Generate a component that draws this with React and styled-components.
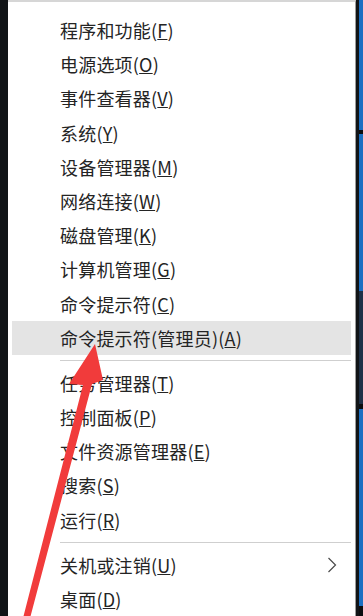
import React from "react";
import styled, { createGlobalStyle } from "styled-components";

const GlobalStyle = createGlobalStyle`
  html, body {
    margin: 0;
    padding: 0;
    background: #111417;
    overflow: hidden;
  }
`;

const StPage = styled.div`
  position: relative;
  display: flex;
  width: 363px;
  height: 616px;
  overflow: hidden;
  font-family: "Microsoft YaHei", "Noto Sans CJK SC", sans-serif;
`;

const StDarkEdge = styled.div`
  width: ${(p) => p.$w}px;
  flex-shrink: 0;
  background: #111417;
`;

const StMenu = styled.div`
  width: 348px;
  flex-shrink: 0;
  background: #ffffff;
  border-top: 2px solid #d6d6d6;
  border-right: 1px solid #9c9c9c;
  box-sizing: border-box;
  padding-top: 11px;
  display: flex;
  flex-direction: column;
`;

const StItem = styled.div`
  height: 34.4px;
  margin: 0 4px;
  padding: 0 14px 0 48px;
  display: flex;
  align-items: center;
  font-size: 18px;
  color: #242424;
  letter-spacing: 0.2px;
  background: ${(p) => (p.$active ? "#e4e4e4" : "transparent")};
  white-space: nowrap;
`;

const StSeparator = styled.div`
  height: 11px;
  margin: 0 4px 0 52px;
  display: flex;
  align-items: center;
  &::after {
    content: "";
    flex: 1;
    height: 1px;
    background: #cfcfcf;
  }
`;

const StChevron = styled.svg`
  margin-left: auto;
  width: 10px;
  height: 16px;
`;

const StStrip = styled.div`
  width: 4px;
  flex-shrink: 0;
  display: flex;
  flex-direction: column;
`;

const StSegment = styled.div`
  height: ${(p) => p.$h}px;
  background: ${(p) => p.$c};
`;

const StArrow = styled.svg`
  position: absolute;
  left: 0;
  top: 0;
  width: 363px;
  height: 616px;
  pointer-events: none;
`;

const top = [
  ["程序和功能", "F"],
  ["电源选项", "O"],
  ["事件查看器", "V"],
  ["系统", "Y"],
  ["设备管理器", "M"],
  ["网络连接", "W"],
  ["磁盘管理", "K"],
  ["计算机管理", "G"],
  ["命令提示符", "C"],
  ["命令提示符(管理员)", "A", true],
];

const middle = [
  ["任务管理器", "T"],
  ["控制面板", "P"],
  ["文件资源管理器", "E"],
  ["搜索", "S"],
  ["运行", "R"],
];

const bottom = [
  ["关机或注销", "U", false, true],
  ["桌面", "D"],
];

const segments = [
  [130, "#1b6fc2"],
  [4, "#0b0d10"],
  [157, "#1b6fc2"],
  [113, "#1e3047"],
  [5, "#0b0d10"],
  [197, "#1b6fc2"],
  [10, "#0b0d10"],
];

function Item({ label, k, active, sub }) {
  return (
    <StItem $active={active}>
      <span>
        {label}(<u>{k}</u>)
      </span>
      {sub && (
        <StChevron viewBox="0 0 10 16">
          <polyline
            points="1.5,1 8.5,8 1.5,15"
            fill="none"
            stroke="#4a4a4a"
            strokeWidth="1.2"
          />
        </StChevron>
      )}
    </StItem>
  );
}

function App() {
  return (
    <>
      <GlobalStyle />
      <StPage>
        <StDarkEdge $w={8} />
        <StMenu>
          {top.map(([l, k, a]) => (
            <Item key={l} label={l} k={k} active={a} />
          ))}
          <StSeparator />
          {middle.map(([l, k]) => (
            <Item key={l} label={l} k={k} />
          ))}
          <StSeparator />
          {bottom.map(([l, k, a, s]) => (
            <Item key={l} label={l} k={k} sub={s} />
          ))}
        </StMenu>
        <StDarkEdge $w={3} />
        <StStrip>
          {segments.map(([h, c], i) => (
            <StSegment key={i} $h={h} $c={c} />
          ))}
        </StStrip>
        <StArrow viewBox="0 0 363 616">
          <polygon
            points="95,344 103,380 92,384 29,622 22,622 83,385 69,384"
            fill="#f13b3b"
          />
        </StArrow>
      </StPage>
    </>
  );
}

export default App;
